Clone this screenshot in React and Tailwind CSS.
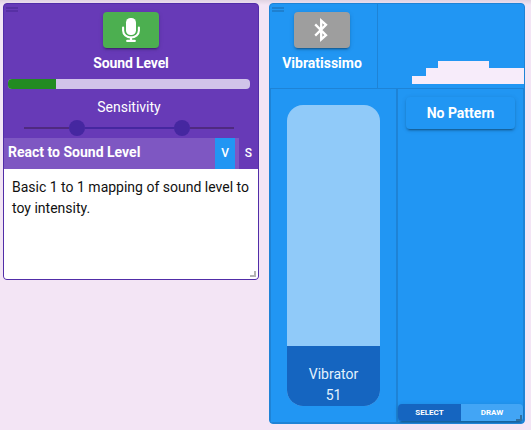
import React from "react";

const raised = "shadow-[0_3px_1px_-2px_rgba(0,0,0,0.2),0_2px_2px_0_rgba(0,0,0,0.14),0_1px_5px_0_rgba(0,0,0,0.12)]";

function DragHandle({ className }) {
  return (
    <div className={`absolute left-[2px] top-[3px] flex w-3 flex-col gap-px ${className}`}>
      <div className="h-[2px] bg-current" />
      <div className="h-[2px] bg-current" />
    </div>
  );
}

function MicIcon() {
  return (
    <svg viewBox="0 0 18 24" className="h-6 w-[18px]" fill="none" stroke="currentColor">
      <rect x="4" y="0" width="10" height="17" rx="4.6" fill="currentColor" stroke="none" />
      <path d="M1.1 9.5v3a7.9 7 0 0 0 15.8 0v-3" strokeWidth="2.1" strokeLinecap="round" />
      <path d="M9 19.5V23M5.2 22.9h7.6" strokeWidth="2.2" strokeLinecap="round" />
    </svg>
  );
}

function BluetoothIcon() {
  return (
    <svg viewBox="0 0 14 24" className="h-6 w-[14px] -translate-x-px" fill="none" stroke="currentColor" strokeWidth="2.3">
      <path d="M1.2 6.4 12 17.1 7.2 21.4V2.6L12 6.9 1.2 17.6" />
    </svg>
  );
}

function SoundLevel() {
  return (
    <section className="relative flex h-[277px] w-[256px] flex-col overflow-hidden rounded border border-[#512da8] bg-[#673ab7]">
      <DragHandle className="text-[#5730a4]" />
      <div className="flex h-[134px] flex-col items-center pt-2">
        <button className={`flex h-9 w-14 items-center justify-center rounded bg-[#4caf50] ${raised}`}>
          <MicIcon />
        </button>
        <h2 className="mt-[5px] h-5 text-[14px] font-bold leading-5 tracking-[-0.01em]">Sound Level</h2>
        <div className="mt-[6px] h-[10px] w-[242px] self-start overflow-hidden rounded bg-[#d1c4e9] ml-1">
          <div className="h-full w-12 bg-[#228b22]" />
        </div>
        <div className="mt-2 h-5 pr-1 text-[14px] leading-5">Sensitivity</div>
        <div className="mt-[3px] flex h-4 w-[210px] items-center self-start ml-5">
          <div className="h-[2px] w-[45px] bg-[#4f2a80]" />
          <div className="h-4 w-4 rounded-full bg-[#4527a0]" />
          <div className="h-[2px] w-[89px] bg-[#4527a0]" />
          <div className="h-4 w-4 rounded-full bg-[#4527a0]" />
          <div className="h-[2px] flex-1 bg-[#4f2a80]" />
        </div>
      </div>
      <div className="flex h-[31px] items-stretch text-[14px] leading-[29px]">
        <div className="flex w-[235px] justify-between bg-[#7e57c2] pl-1 pr-1">
          <span className="font-bold">React to Sound Level</span>
          <span className="w-5 bg-[#2196f3] text-center text-[12px] font-medium leading-[30px]">V</span>
        </div>
        <span className="flex-1 text-center text-[12px] font-medium leading-[30px]">S</span>
      </div>
      <p className="flex-1 bg-white px-2 pt-2 text-[14px] leading-[21px] text-[#111]">
        Basic 1 to 1 mapping of sound level to toy intensity.
      </p>
      <div className="absolute bottom-[2px] right-[2px] h-[6px] w-[6px] border-b-2 border-r-2 border-[#b3b3b3]" />
    </section>
  );
}

function Vibratissimo() {
  return (
    <section className="relative flex h-[421px] w-[256px] flex-col overflow-hidden rounded border border-[#1e83d6] bg-[#2196f3]">
      <DragHandle className="text-[#1e80d0]" />
      <header className="flex h-[85px] border-b border-[#1e83d6]">
        <div className="flex w-[108px] flex-col items-center border-r border-[#1e83d6] pr-[3px] pt-2">
          <button className={`flex h-9 w-14 items-center justify-center rounded bg-[#9e9e9e] ${raised}`}>
            <BluetoothIcon />
          </button>
          <h2 className="mt-[5px] h-5 text-[14px] font-bold leading-5">Vibratissimo</h2>
        </div>
        <div className="flex flex-1 items-end pb-1 pl-[34px]">
          <div className="h-2 w-[14px] bg-[#f7ecfa]" />
          <div className="h-4 w-3 bg-[#f7ecfa]" />
          <div className="h-[23px] w-[51px] bg-[#f7ecfa]" />
          <div className="h-4 flex-1 bg-[#f7ecfa]" />
        </div>
      </header>
      <div className="flex flex-1 border-b border-l border-r border-[#1e83d6]">
        <div className="flex w-[127px] flex-col border-r-2 border-[#1e83d6] pl-4 pt-4">
          <div className="flex h-[301px] w-[93px] flex-col justify-end overflow-hidden rounded-2xl bg-[#90caf9]">
            <div className="h-[60px] bg-[#1565c0] pt-[18px] text-center text-[14px] leading-[21px] text-[#e3f2fd]">
              <div>Vibrator</div>
              <div>51</div>
            </div>
          </div>
        </div>
        <div className="flex flex-1 flex-col justify-between pb-px">
          <button className={`ml-2 mt-2 h-8 w-[109px] rounded bg-[#2196f3] text-[14px] font-bold leading-[31px] ${raised}`}>
            No Pattern
          </button>
          <div className={`flex h-[17px] overflow-hidden rounded text-center text-[8px] font-bold leading-[17px] ${raised}`}>
            <span className="w-[63px] bg-[#1565c0]">SELECT</span>
            <span className="flex-1 bg-[#42a5f5]">DRAW</span>
          </div>
        </div>
      </div>
      <div className="absolute bottom-[2px] right-[2px] h-[6px] w-[6px] border-b-2 border-r-2 border-[#316f9f]" />
    </section>
  );
}

export default function App() {
  return (
    <main className="flex h-[430px] w-[531px] items-start gap-[10px] overflow-hidden bg-[#f3e5f5] bg-[linear-gradient(to_bottom,rgba(0,0,0,0.08),transparent_5px)] pl-[3px] pt-[3px] font-['Roboto',sans-serif] text-white">
      <SoundLevel />
      <Vibratissimo />
    </main>
  );
}
